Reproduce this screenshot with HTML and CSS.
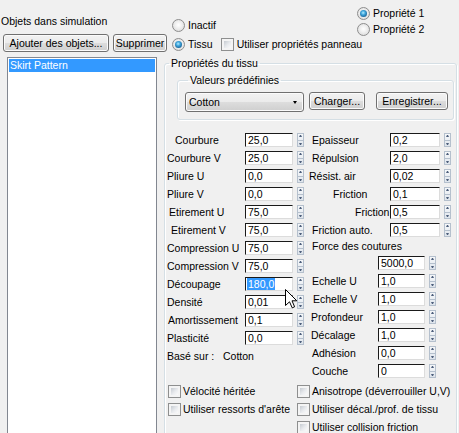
FILE: index.html
```html
<!DOCTYPE html>
<html lang="fr">
<head>
<meta charset="utf-8">
<title>Objets dans simulation</title>
<link rel="stylesheet" href="styles.css">
</head>
<body>
<div class="app">
  <div class="top">
    <div class="objs">
      <div class="objs-title">Objets dans simulation</div>
      <div class="btn-row">
        <button class="btn btn-add" type="button">Ajouter des objets...</button>
        <button class="btn btn-del" type="button">Supprimer</button>
      </div>
    </div>
    <div class="mode">
      <div class="opt"><span class="radio"></span><span>Inactif</span></div>
      <div class="opt opt-tissu"><span class="radio on"></span><span>Tissu</span><span class="check check-panel"></span><span>Utiliser propriétés panneau</span></div>
    </div>
    <div class="props">
      <div class="opt"><span class="radio on"></span><span>Propriété 1</span></div>
      <div class="opt"><span class="radio"></span><span>Propriété 2</span></div>
    </div>
  </div>

  <div class="main">
    <div class="listbox"><div class="list-item sel">Skirt Pattern</div></div>

    <fieldset class="group group-tissu">
      <legend>Propriétés du tissu</legend>

      <fieldset class="group group-preset">
        <legend>Valeurs prédéfinies</legend>
        <div class="preset-row">
          <div class="combo"><span>Cotton</span><span class="combo-arrow"></span></div>
          <button class="btn btn-load" type="button">Charger...</button>
          <button class="btn btn-save" type="button">Enregistrer...</button>
        </div>
      </fieldset>

      <div class="params">
        <div class="col col-left">
          <div class="row"><span class="lbl p10">Courbure</span><span class="edit">25,0</span><span class="spin"><i></i><i></i></span></div>
          <div class="row"><span class="lbl p2">Courbure V</span><span class="edit">25,0</span><span class="spin"><i></i><i></i></span></div>
          <div class="row"><span class="lbl p2">Pliure U</span><span class="edit">0,0</span><span class="spin"><i></i><i></i></span></div>
          <div class="row"><span class="lbl p2">Pliure V</span><span class="edit">0,0</span><span class="spin"><i></i><i></i></span></div>
          <div class="row"><span class="lbl p4">Etirement U</span><span class="edit">75,0</span><span class="spin"><i></i><i></i></span></div>
          <div class="row"><span class="lbl p6">Etirement V</span><span class="edit">75,0</span><span class="spin"><i></i><i></i></span></div>
          <div class="row"><span class="lbl p2">Compression U</span><span class="edit">75,0</span><span class="spin"><i></i><i></i></span></div>
          <div class="row"><span class="lbl p2">Compression V</span><span class="edit">75,0</span><span class="spin"><i></i><i></i></span></div>
          <div class="row"><span class="lbl p2">Découpage</span><span class="edit edit-active"><span class="hl">180,0</span></span><span class="spin"><i></i><i></i></span></div>
          <div class="row"><span class="lbl p2">Densité</span><span class="edit">0,01</span><span class="spin"><i></i><i></i></span></div>
          <div class="row"><span class="lbl p3">Amortissement</span><span class="edit">0,1</span><span class="spin"><i></i><i></i></span></div>
          <div class="row"><span class="lbl p2">Plasticité</span><span class="edit">0,0</span><span class="spin"><i></i><i></i></span></div>
          <div class="row based"><span class="lbl p2">Basé sur :</span><span>Cotton</span></div>
        </div>

        <div class="col col-right">
          <div class="row"><span class="lbl p4">Epaisseur</span><span class="edit">0,2</span><span class="spin"><i></i><i></i></span></div>
          <div class="row"><span class="lbl p4">Répulsion</span><span class="edit">2,0</span><span class="spin"><i></i><i></i></span></div>
          <div class="row"><span class="lbl p1">Résist. air</span><span class="edit">0,02</span><span class="spin"><i></i><i></i></span></div>
          <div class="row"><span class="lbl p25">Friction</span><span class="edit">0,1</span><span class="spin"><i></i><i></i></span></div>
          <div class="row"><span class="lbl p47">Friction</span><span class="edit">0,5</span><span class="spin"><i></i><i></i></span></div>
          <div class="row"><span class="lbl p4">Friction auto.</span><span class="edit">0,5</span><span class="spin"><i></i><i></i></span></div>
          <div class="row short"><span class="lbl p4">Force des coutures</span></div>
          <div class="lower">
            <div class="row"><span class="lbl"></span><span class="edit">5000,0</span><span class="spin"><i></i><i></i></span></div>
            <div class="row"><span class="lbl p4">Echelle U</span><span class="edit">1,0</span><span class="spin"><i></i><i></i></span></div>
            <div class="row"><span class="lbl p5">Echelle V</span><span class="edit">1,0</span><span class="spin"><i></i><i></i></span></div>
            <div class="row"><span class="lbl p3">Profondeur</span><span class="edit">1,0</span><span class="spin"><i></i><i></i></span></div>
            <div class="row"><span class="lbl p3">Décalage</span><span class="edit">1,0</span><span class="spin"><i></i><i></i></span></div>
            <div class="row"><span class="lbl p4">Adhésion</span><span class="edit">0,0</span><span class="spin"><i></i><i></i></span></div>
            <div class="row"><span class="lbl p4">Couche</span><span class="edit">0</span><span class="spin"><i></i><i></i></span></div>
          </div>
        </div>
      </div>

      <div class="checks">
        <div class="chk-col chk-left">
          <div class="chk"><span class="check"></span><span>Vélocité héritée</span></div>
          <div class="chk"><span class="check"></span><span>Utiliser ressorts d'arête</span></div>
        </div>
        <div class="chk-col">
          <div class="chk"><span class="check"></span><span>Anisotrope (déverrouiller U,V)</span></div>
          <div class="chk"><span class="check"></span><span>Utiliser décal./prof. de tissu</span></div>
          <div class="chk"><span class="check"></span><span>Utiliser collision friction</span></div>
        </div>
      </div>
    </fieldset>
  </div>

  <svg class="cursor" width="13" height="20" viewBox="0 0 13 20" aria-hidden="true">
    <path d="M0.5 0.5 L0.5 16.5 L4.5 12.8 L7.2 18.8 L9.6 17.8 L7 11.8 L11.8 11.8 Z" fill="#fff" stroke="#000" stroke-width="1" stroke-linejoin="miter"/>
  </svg>
</div>
</body>
</html>
```

FILE: styles.css
```css
* { box-sizing: border-box; }

html, body {
  margin: 0;
  padding: 0;
}

body {
  width: 459px;
  height: 433px;
  overflow: hidden;
  background: #f0f0f0;
  font-family: "Liberation Sans", Arial, sans-serif;
  font-size: 10.5px;
  line-height: 13px;
  color: #000;
}

.app {
  position: relative;
  width: 459px;
  height: 433px;
  overflow: hidden;
}

/* ---------- top strip ---------- */
.top {
  display: grid;
  grid-template-columns: 172px 185px 1fr;
  height: 57px;
}

.objs-title {
  padding-top: 15px;
  padding-left: 1px;
  white-space: nowrap;
}

.btn-row {
  display: flex;
  margin-top: 6px;
}

.btn {
  font: inherit;
  line-height: 14px;
  height: 18px;
  padding: 0;
  margin: 0;
  border: 1px solid #707070;
  border-radius: 3px;
  background: linear-gradient(#f2f2f2, #ebebeb 50%, #dddddd 50%, #cfcfcf);
  box-shadow: inset 0 0 0 1px #fbfbfb;
  color: #000;
  white-space: nowrap;
  text-align: center;
}

.btn-add { margin-left: 3px; width: 106px; }
.btn-del { margin-left: 4px; width: 54px; }

.mode {
  padding-top: 19px;
  white-space: nowrap;
}

.opt {
  display: flex;
  align-items: center;
  height: 13px;
  white-space: nowrap;
}

.opt .radio { margin-right: 3px; }
.opt-tissu { margin-top: 6px; }
.check-panel { margin-left: 8px; margin-right: 3px; }

.props { padding-top: 7px; }
.props .opt + .opt { margin-top: 3px; }

/* radio & checkbox */
.radio {
  position: relative;
  flex: none;
  width: 13px;
  height: 13px;
  border-radius: 50%;
  border: 1px solid #8d8d8d;
  background: radial-gradient(circle at 50% 45%, #ffffff 0, #f2f2f2 35%, #d4d4d4 100%);
}

.radio.on::after {
  content: "";
  position: absolute;
  left: 2px;
  top: 2px;
  width: 7px;
  height: 7px;
  border-radius: 50%;
  background: radial-gradient(circle at 45% 40%, #b4ecff 0, #3fa6dc 35%, #175c8f 80%, #0e3f66 100%);
}

.check {
  position: relative;
  flex: none;
  width: 13px;
  height: 13px;
  border: 1px solid #8e8f8f;
  background: #f4f4f4;
}

.check::after {
  content: "";
  position: absolute;
  left: 2px;
  top: 2px;
  right: 2px;
  bottom: 2px;
  background: linear-gradient(135deg, #c6cbd1 0%, #e9ebee 55%, #fafafa 100%);
}

/* ---------- main ---------- */
.main {
  display: flex;
  align-items: flex-start;
}

.listbox {
  margin-left: 7px;
  width: 150px;
  height: 390px;
  flex: none;
  background: #fff;
  border: 1px solid #828790;
  padding: 1px;
}

.list-item {
  height: 13px;
  line-height: 13px;
  padding-left: 1px;
  white-space: nowrap;
}

.list-item.sel {
  background: #3399ff;
  color: #fff;
}

.group {
  margin: 0;
  padding: 0;
  min-width: 0;
  border: 1px solid #d5dfe5;
  border-radius: 3px;
  box-shadow: inset 1px 1px 0 #ffffff, 1px 1px 0 #ffffff;
}

.group > legend {
  padding: 0 2px;
  line-height: 13px;
  white-space: nowrap;
}

.group-tissu {
  flex: none;
  margin-left: 7px;
  width: 293px;
  height: 400px;
}

.group-tissu > legend { margin-left: 4px; }

.group-preset {
  margin: 4px 0 0 12px;
  width: 277px;
  padding: 5px 0 7px 7px;
}

.group-preset > legend { margin-left: 3px; }

.preset-row {
  display: flex;
  align-items: flex-start;
}

.combo {
  display: flex;
  align-items: center;
  justify-content: space-between;
  width: 119px;
  height: 20px;
  padding: 0 6px 0 3px;
  border: 1px solid #707070;
  border-radius: 3px;
  background: linear-gradient(#f2f2f2, #ebebeb 50%, #dddddd 50%, #cfcfcf);
  box-shadow: inset 0 0 0 1px #fbfbfb;
}

.combo-arrow {
  width: 1px;
  height: 0;
  border-left: 2px solid transparent;
  border-right: 2px solid transparent;
  border-top: 3px solid #000;
}

.btn-load { margin-left: 5px; width: 56px; }
.btn-save { margin-left: 11px; width: 72px; }

/* ---------- parameter grid ---------- */
.params {
  display: flex;
  margin-top: 11px;
}

.col-left { width: 143px; flex: none; }
.col-right { width: 148px; flex: none; }

.row {
  display: flex;
  align-items: center;
  height: 18px;
  white-space: nowrap;
}

.row.short { height: 15px; }

.lbl {
  flex: none;
  white-space: nowrap;
}

.col-left .lbl { width: 80px; }
.col-right .lbl { width: 82px; }
.col-right .lower .lbl { width: 70px; }
.based .lbl { width: 58px; }

.p1 { padding-left: 1px; }
.p2 { padding-left: 2px; }
.p3 { padding-left: 3px; }
.p4 { padding-left: 4px; }
.p5 { padding-left: 5px; }
.p6 { padding-left: 6px; }
.p10 { padding-left: 10px; }
.p25 { padding-left: 25px; }
.p47 { padding-left: 47px; }

.edit {
  position: relative;
  flex: none;
  display: block;
  width: 48px;
  height: 14px;
  padding-left: 2px;
  line-height: 12px;
  background: #fff;
  border-style: solid;
  border-width: 1px;
  border-color: #1a1a1a #dcdcdc #dcdcdc #1a1a1a;
  white-space: nowrap;
  overflow: hidden;
}

.col-right .edit { width: 50px; }
.col-right .lower .edit { width: 47px; }

.edit-active { padding-left: 1px; }

.hl {
  display: inline-block;
  padding: 0 1px;
  background: #3399ff;
  color: #fff;
}

.spin {
  flex: none;
  display: flex;
  flex-direction: column;
  margin-left: 4px;
  width: 7px;
  height: 14px;
  border: 1px solid #b5c0cd;
  background: linear-gradient(#f6f8fa, #dfe5ec);
}

.spin i {
  position: relative;
  flex: 1;
}

.spin i + i { border-top: 1px solid #b5c0cd; }

.spin i::after {
  content: "";
  position: absolute;
  left: 1px;
  top: 1px;
  width: 1px;
  height: 0;
  border-left: 1px solid transparent;
  border-right: 1px solid transparent;
  border-bottom: 2px solid #4e5f7c;
}

.spin i + i::after {
  top: 2px;
  border-bottom: 0;
  border-top: 2px solid #4e5f7c;
}

/* ---------- checkboxes ---------- */
.checks {
  display: flex;
  margin-top: 5px;
}

.chk-col {
  display: flex;
  flex-direction: column;
  gap: 5px;
}

.chk-left {
  width: 132px;
  flex: none;
  padding-left: 3px;
}

.chk {
  display: flex;
  align-items: center;
  gap: 2px;
  height: 13px;
  white-space: nowrap;
}

/* mouse pointer lying over the dialog */
.cursor {
  position: absolute;
  left: 285px;
  top: 289px;
  pointer-events: none;
}
```
